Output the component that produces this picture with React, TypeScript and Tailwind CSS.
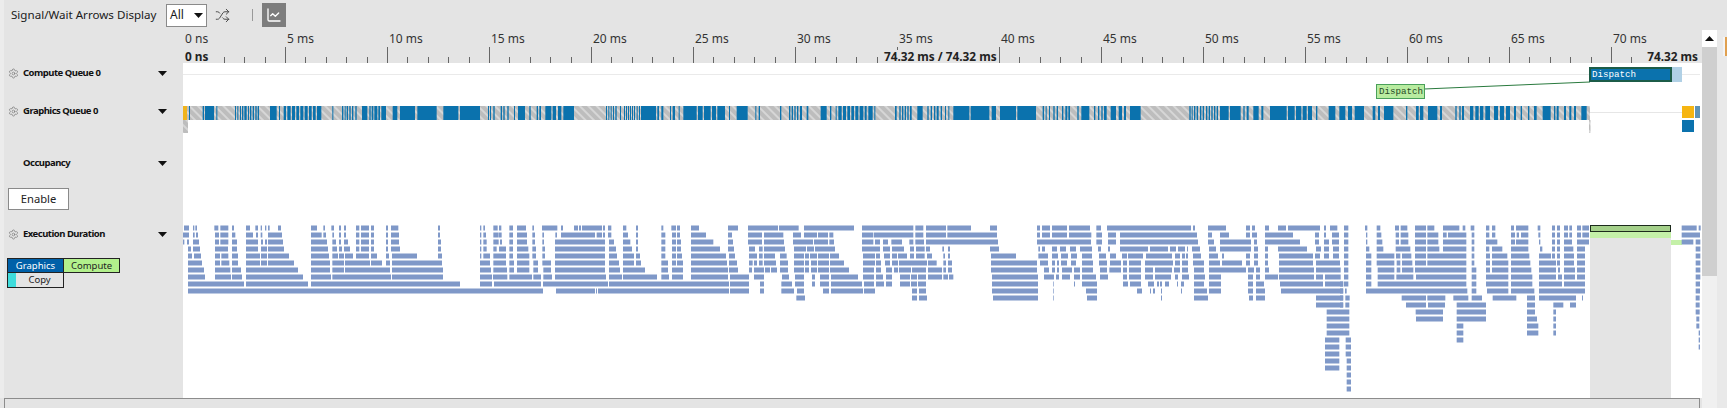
import { ChartLine, Settings, Shuffle } from "lucide-react";

type Seg = [number, number];

// segments are read off 3x crops, so each group has a base x and is divided by 3
const execGroups: { base: number; rows: Seg[][] }[] = [
  {
    base: 170,
    rows: [
      [[42,57],[69,73],[76,81],[133,145],[151,175],[186,192],[228,240],[256,264],[272,276],[285,289],[294,299],[324,333],[423,441],[460,465],[484,492],[507,513],[522,528],[558,568],[573,597],[603,612],[648,654],[663,685],[804,810],[930,934],[940,945],[970,983],[987,994],[1018,1029],[1041,1068],[1087,1092],[1116,1162],[1173,1179]],
      [[39,57],[69,74],[78,84],[135,147],[151,175],[186,196],[228,249],[258,264],[272,277],[294,336],[423,455],[460,468],[487,492],[507,513],[522,528],[558,568],[573,597],[603,612],[648,654],[663,687],[804,810],[930,934],[940,948],[970,986],[987,995],[1018,1029],[1041,1071],[1087,1095],[1117,1122],[1156,1161],[1173,1200]],
      [[39,43],[51,57],[69,87],[135,147],[151,175],[186,201],[228,264],[273,279],[285,291],[294,339],[423,471],[487,498],[507,513],[522,534],[558,568],[573,597],[603,612],[648,654],[663,687],[804,813],[930,934],[940,950],[970,986],[990,996],[1018,1029],[1041,1071],[1087,1095],[1117,1122],[1155,1200]],
      [[54,63],[69,90],[135,174],[186,201],[228,264],[273,291],[294,342],[423,474],[487,501],[507,516],[522,540],[558,568],[573,597],[603,612],[648,654],[663,690],[804,813],[930,934],[940,950],[970,980],[987,1008],[1018,1029],[1041,1075],[1087,1098],[1117,1125],[1155,1200]],
      [[54,66],[72,93],[135,150],[154,175],[186,204],[228,270],[273,291],[294,357],[423,477],[487,504],[507,522],[525,549],[558,597],[603,621],[648,657],[666,741],[804,816],[930,934],[940,960],[970,1008],[1018,1029],[1041,1078],[1087,1098],[1117,1125],[1155,1200]],
      [[54,96],[135,150],[154,178],[186,204],[228,270],[273,291],[294,372],[423,480],[487,522],[525,600],[603,636],[648,660],[666,816],[930,960],[970,1008],[1018,1032],[1041,1078],[1090,1104],[1117,1143],[1155,1200]],
      [[54,102],[135,181],[186,213],[228,384],[423,480],[487,522],[525,660],[666,819],[930,963],[970,1011],[1018,1032],[1041,1078],[1090,1104],[1120,1143],[1155,1200]],
      [[54,105],[135,183],[186,216],[228,399],[423,483],[487,663],[666,819],[930,966],[969,1012],[1018,1086],[1090,1113],[1120,1146],[1155,1200]],
      [[54,222],[228,414],[423,870],[930,966],[972,1113],[1119,1200]],
      [[54,1119],[1158,1200]],
    ],
  },
  {
    base: 570,
    rows: [
      [[12,24],[27,33],[36,96],[99,105],[114,124],[159,169],[198,204],[274,280],[304,318],[321,330],[363,387],[474,504],[534,624],[627,686],[702,852],[876,1030],[1036,1060],[1068,1128],[1132,1200]],
      [[0,75],[80,96],[99,105],[114,124],[159,174],[198,204],[274,286],[306,318],[321,330],[363,408],[474,486],[534,576],[582,640],[669,693],[702,741],[744,774],[778,790],[876,910],[912,1030],[1036,1060],[1068,1128],[1132,1200]],
      [[0,105],[117,132],[159,181],[198,204],[274,286],[306,318],[321,333],[363,430],[474,489],[534,576],[582,642],[669,729],[732,774],[778,792],[876,910],[915,930],[939,954],[964,996],[1018,1030],[1036,1062],[1068,1200]],
      [[0,105],[117,138],[159,186],[198,204],[274,286],[306,318],[321,333],[363,450],[474,492],[537,555],[567,578],[582,645],[672,708],[711,732],[735,795],[876,930],[939,960],[966,1002],[1020,1032],[1038,1064],[1068,1080],[1117,1122],[1134,1140]],
      [[0,105],[117,141],[159,192],[198,210],[274,286],[306,318],[321,336],[363,468],[477,495],[537,561],[567,578],[582,615],[630,650],[672,702],[705,717],[720,741],[744,777],[780,807],[879,915],[918,930],[942,960],[966,981],[984,1011],[1020,1032],[1038,1064],[1071,1086],[1120,1125],[1134,1140]],
      [[0,105],[117,147],[159,192],[198,213],[274,294],[306,318],[321,339],[363,471],[477,501],[537,548],[552,561],[567,578],[582,618],[630,654],[672,702],[705,717],[723,741],[744,777],[780,822],[879,915],[918,933],[945,960],[966,984],[987,1071],[1074,1100],[1120,1128],[1134,1146]],
      [[0,105],[117,150],[159,225],[274,294],[306,339],[363,474],[477,504],[537,546],[552,582],[585,600],[603,621],[630,654],[672,702],[705,717],[723,741],[744,777],[780,837],[879,912],[918,933],[948,966],[972,984],[987,1023],[1026,1068],[1074,1116],[1120,1128],[1134,1146]],
      [[0,108],[117,156],[159,261],[274,297],[306,339],[363,474],[480,537],[552,582],[636,657],[675,702],[726,735],[750,777],[783,864],[879,912],[918,939],[948,966],[990,1020],[1023,1041],[1044,1068],[1074,1116],[1120,1134],[1137,1150]],
      [[0,114],[117,477],[480,537],[570,582],[634,666],[675,702],[726,735],[750,777],[783,876],[882,912],[918,942],[948,966],[990,1020],[1023,1041],[1044,1068]],
      [[0,75],[78,81],[84,477],[480,537],[570,582],[634,672],[681,702],[759,777],[783,879],[882,915],[1026,1041],[1047,1068]],
      [[679,705],[1026,1041],[1047,1071]],
    ],
  },
  {
    base: 970,
    rows: [
      [[0,3],[60,81],[201,210],[216,240],[246,291],[297,360],[379,393],[411,663],[669,675],[714,768],[828,840],[846,855],[885,897],[924,948],[954,1050],[1062,1068],[1080,1102]],
      [[0,81],[201,210],[216,240],[246,291],[297,364],[379,396],[414,438],[450,681],[714,726],[750,777],[828,840],[846,861],[885,969],[1035,1047],[1062,1068],[1086,1107]],
      [[0,84],[201,363],[379,396],[414,438],[450,684],[714,732],[750,843],[852,861],[885,990],[1035,1047],[1062,1077],[1086,1107]],
      [[60,87],[205,210],[216,225],[246,261],[270,288],[300,318],[330,366],[384,393],[414,420],[450,534],[540,594],[600,618],[624,645],[651,654],[666,690],[717,738],[750,843],[852,864],[885,894],[924,1011],[1038,1053],[1062,1077],[1089,1107]],
      [[63,138],[205,234],[246,264],[273,294],[303,321],[336,366],[387,408],[420,438],[456,471],[474,519],[528,606],[615,630],[636,645],[648,654],[669,693],[717,744],[756,762],[828,840],[852,864],[885,894],[927,1029],[1035,1050],[1062,1077],[1089,1107]],
      [[63,201],[210,234],[246,255],[261,267],[273,291],[303,318],[336,369],[387,411],[420,453],[459,471],[477,513],[525,609],[615,630],[636,654],[669,702],[717,750],[756,816],[828,840],[852,864],[885,894],[927,1029],[1038,1110]],
      [[63,201],[222,237],[246,255],[261,267],[276,306],[312,330],[336,369],[390,411],[418,453],[459,471],[477,513],[525,549],[555,606],[612,630],[636,654],[672,702],[717,828],[834,852],[858,870],[885,897],[927,1032],[1038,1110]],
      [[66,204],[222,252],[258,267],[276,300],[312,330],[336,378],[390,414],[459,471],[477,513],[525,549],[555,603],[615,624],[636,657],[672,705],[717,753],[834,849],[858,870],[885,924],[927,1032],[1038,1059],[1065,1110]],
      [[66,204],[250,252],[312,315],[336,381],[459,474],[480,513],[534,552],[561,567],[570,576],[585,597],[621,624],[633,642],[672,702],[717,753],[834,849],[858,882],[930,1059],[1065,1119]],
      [[66,204],[250,252],[348,381],[501,516],[540,543],[549,555],[573,576],[633,636],[672,711],[717,753],[834,849],[858,885],[933,1119]],
      [[69,204],[250,252],[351,381],[573,576],[672,714],[837,849],[858,885],[1038,1119]],
      [[1038,1119]],
    ],
  },
  {
    base: 1340,
    rows: [
      [[12,25],[75,82],[110,121],[165,177],[182,202],[225,258],[262,283],[309,358],[368,376],[392,403],[438,448],[456,466],[513,522],[528,565],[593,601],[636,645],[651,660],[672,684],[688,696],[711,723],[727,747],[1025,1070],[1076,1082]],
      [[12,25],[78,82],[110,124],[167,177],[182,205],[225,258],[262,295],[309,320],[324,379],[395,403],[438,448],[456,466],[513,525],[530,537],[543,565],[595,601],[636,645],[651,660],[672,684],[688,696],[711,723],[727,747],[1025,1080]],
      [[12,25],[78,82],[110,127],[167,177],[182,205],[225,258],[262,295],[309,379],[395,403],[438,472],[513,525],[528,565],[597,601],[636,645],[651,660],[672,696],[711,747],[1025,1060],[1067,1081]],
      [[12,25],[78,88],[110,130],[167,211],[225,258],[262,298],[309,379],[395,403],[438,448],[456,487],[513,565],[600,607],[636,645],[651,660],[672,700],[711,735],[1067,1081]],
      [[12,25],[78,94],[110,163],[168,181],[186,214],[225,258],[262,379],[395,403],[438,450],[456,502],[513,568],[597,633],[636,645],[651,660],[672,702],[711,735],[1067,1081]],
      [[12,25],[78,94],[110,163],[170,181],[186,217],[225,258],[262,379],[395,403],[438,450],[456,505],[513,571],[597,648],[651,660],[672,702],[711,735],[1067,1081]],
      [[0,2],[12,25],[78,94],[113,163],[170,181],[186,220],[225,379],[395,409],[438,450],[456,505],[513,574],[597,648],[654,660],[672,705],[711,735],[1067,1081]],
      [[0,2],[12,25],[78,94],[113,163],[169,220],[228,379],[395,409],[438,505],[513,577],[597,648],[654,666],[672,705],[711,735],[1067,1081]],
      [[0,10],[12,25],[78,94],[113,379],[395,409],[438,505],[513,577],[597,666],[672,735],[1067,1080]],
      [[0,10],[15,20],[78,382],[395,409],[441,505],[513,583],[597,735],[1067,1080]],
      [[0,10],[16,29],[185,258],[262,316],[340,385],[395,426],[458,529],[561,585],[597,708],[726,729],[1067,1079]],
      [[0,10],[16,28],[198,258],[264,315],[350,438],[561,585],[640,670],[690,708],[1067,1079]],
      [[-40,28],[227,309],[350,438],[561,585],[640,648],[1067,1079]],
      [[-40,28],[228,309],[350,438],[561,591],[640,648],[1069,1078]],
      [[-40,28],[350,370],[561,595],[640,648],[1069,1078]],
      [[-40,28],[350,370],[561,595],[640,648],[1076,1080]],
      [[-45,-2],[17,33],[350,370],[1076,1080]],
      [[-45,-2],[17,33],[1076,1080]],
      [[-45,-2],[17,33]],
      [[-45,-2],[20,33]],
      [[-45,-2],[20,33]],
      [[20,33]],
      [[20,33]],
      [[20,33]],
    ],
  },
];

const queueGroups: { base: number; segs: Seg[] }[] = [
  { base: 180, segs: [[27,30],[68,72],[75,102],[109,112],[165,168],[172,175],[180,183],[186,190],[193,200],[204,207],[210,214],[218,222],[226,230],[233,237],[270,290],[297,300],[311,318],[322,332],[336,345],[349,357],[361,370],[374,383],[387,395],[399,407],[411,424],[457,460],[486,490],[494,497],[500,504],[508,512],[516,520],[526,530],[546,562],[568,572],[575,580],[583,592],[595,600],[604,618],[638,652],[660,705],[712,770],[790,835],[840,900]] },
  { base: 480, segs: [[24,27],[30,33],[40,44],[62,66],[70,74],[82,86],[102,105],[114,135],[148,152],[170,174],[178,183],[196,214],[218,228],[234,244],[250,282],[378,381],[385,388],[392,395],[399,402],[406,410],[420,423],[432,435],[438,441],[444,447],[450,453],[456,459],[462,465],[470,473],[477,480],[483,528],[532,537],[544,550],[570,573],[578,585],[596,599],[610,650],[654,668],[672,692],[696,708],[712,735],[747,750],[770,803],[826,829],[836,840],[900,904],[927,931],[935,939],[943,947],[951,955],[960,966],[980,985],[1022,1040],[1050,1054],[1067,1070],[1075,1085],[1089,1098],[1102,1110],[1114,1122],[1126,1135],[1139,1150],[1154,1160],[1165,1178],[1183,1186]] },
  { base: 880, segs: [[45,50],[58,62],[66,70],[74,78],[82,86],[90,95],[112,128],[142,146],[152,156],[162,166],[170,176],[182,186],[195,198],[205,208],[220,268],[272,328],[335,348],[360,408],[412,468],[488,492],[497,500],[507,510],[520,524],[530,534],[546,550],[556,562],[565,570],[592,596],[604,628],[642,646],[654,658],[664,668],[672,680],[692,708],[716,726],[732,738],[750,782],[928,932],[935,938],[942,946],[950,954],[960,964],[968,972],[978,982],[986,990],[994,998],[1002,1006],[1010,1014],[1020,1046],[1050,1082],[1090,1094],[1100,1106],[1120,1136],[1144,1150],[1170,1200]] },
  { base: 1280, segs: [[0,20],[24,44],[48,64],[68,80],[84,96],[108,112],[146,166],[178,196],[204,216],[224,252],[278,286],[294,300],[312,340],[378,382],[408,416],[420,430],[444,472],[480,486],[526,530],[538,542],[546,552],[570,580],[586,596],[600,610],[616,630],[642,654],[660,672],[678,690],[702,708],[722,726],[744,748],[762,770],[788,812],[822,826],[830,836],[852,858],[868,874],[882,888],[904,920]] },
];

// chart svg origin in the page
const OX = 183;
const OY = 63;

function TimelineChart() {
  return (
    <svg width="1519" height="335" className="block">
      <defs>
        <pattern id="hatch" width="6" height="6" patternUnits="userSpaceOnUse" patternTransform="rotate(45)">
          <rect width="6" height="6" fill="#bdbdbd" />
          <rect width="6" height="2" fill="#d6d6d6" />
        </pattern>
      </defs>
      <g transform={`translate(${-OX} ${-OY})`}>
        <rect x="183" y="74" width="1517" height="1" fill="#eaeaea" />
        <rect x="1590" y="112" width="92" height="1" fill="#e6e6e6" />

        <rect x="183" y="106" width="1407" height="14" fill="url(#hatch)" />
        <rect x="183" y="120" width="5" height="13" fill="url(#hatch)" />
        <rect x="1589" y="120" width="1.5" height="13" fill="url(#hatch)" />
        <rect x="183" y="106" width="4" height="14" fill="#f0b41c" />
        {queueGroups.map((g) =>
          g.segs.map(([a, b]) => (
            <rect key={`${g.base}-${a}`} x={g.base + a / 3} y="106" width={(b - a) / 3} height="14" fill="#0b72ad" />
          ))
        )}
        <rect x="1682" y="106" width="12" height="12" fill="#f6b511" />
        <rect x="1695" y="106" width="5" height="12" fill="#5f93b5" />
        <rect x="1682" y="120" width="12" height="12" fill="#0b72ad" />

        <rect x="1671" y="67" width="11" height="15" fill="#b0d0e5" />
        <line x1="1424" y1="89" x2="1590" y2="82" stroke="#2a7a3e" strokeWidth="1" />

        <rect x="1590" y="232" width="81" height="166" fill="#e4e4e4" />
        <rect x="1590" y="232" width="81" height="6" fill="#c4f0a8" />
        <rect x="1671" y="240" width="11" height="5" fill="#c4f0a8" />
        {execGroups.map((g) =>
          g.rows.map((row, i) =>
            row.map(([a, b]) => (
              <rect key={`${g.base}-${i}-${a}`} x={g.base + a / 3} y={225.5 + i * 7} width={(b - a) / 3} height="5" fill="#7f98c8" />
            ))
          )
        )}
        <rect x="1590.5" y="225.5" width="80" height="6" fill="#a4d08a" stroke="#1c2a1c" strokeWidth="1" />
      </g>
    </svg>
  );
}

function Caret() {
  return (
    <svg width="9" height="5" viewBox="0 0 9 5" className="shrink-0">
      <polygon points="0,0 9,0 4.5,5" fill="#111" />
    </svg>
  );
}

function LaneLabel({ label, gear = true, className }: { label: string; gear?: boolean; className: string }) {
  return (
    <div className={`flex items-center h-[20px] pr-[16px] text-[9.5px] tracking-[-0.5px] font-bold text-[#111] ${gear ? "pl-[4px] gap-[4px]" : "pl-[19px]"} ${className}`}>
      {gear && <Settings size={11} strokeWidth={1.25} className="text-[#666] shrink-0" />}
      <span className="flex-1 whitespace-nowrap">{label}</span>
      <Caret />
    </div>
  );
}

function Ruler() {
  const labels = ["0 ns"];
  for (let ms = 5; ms <= 70; ms += 5) labels.push(`${ms} ms`);
  const ticks = [];
  for (let ms = 1; ms <= 74; ms++) {
    const x = Math.round(ms * 20.4) + 0.5;
    ticks.push(<line key={ms} x1={x} x2={x} y1={ms % 5 === 0 ? 0 : 10} y2="16" stroke="#666" />);
  }
  return (
    <div className="relative h-[33px] overflow-hidden">
      <div className="flex h-[20px] text-[12px] leading-[18px] text-[#333]">
        {labels.map((l) => (
          <div key={l} className="w-[102px] shrink-0 pl-[2px] whitespace-nowrap">{l}</div>
        ))}
      </div>
      <svg width="1519" height="16" className="absolute left-0 bottom-0">{ticks}</svg>
      <div className="relative flex justify-between pl-[2px] pr-[4px] text-[11.8px] leading-[13px] font-bold text-[#222]">
        <span className="bg-[#e4e4e4] pr-[2px]">0 ns</span>
        <span className="ml-[25px] bg-[#e4e4e4]">74.32 ms / 74.32 ms</span>
        <span className="bg-[#e4e4e4] pl-[2px]">74.32 ms</span>
      </div>
    </div>
  );
}

export default function App() {
  return (
    <div className="w-[1727px] h-[408px] overflow-hidden bg-[#e4e4e4] font-['Noto_Sans',sans-serif]">
      {/* toolbar */}
      <div className="flex items-center h-[30px] border-l-4 border-[#ececec] pl-[7px] text-[#1a1a1a]">
        <span className="w-[147px] text-[11.6px] whitespace-nowrap">Signal/Wait Arrows Display</span>
        <div className="ml-[8px] flex items-center justify-between w-[41px] h-[23px] bg-white border border-[#8a8a8a] pl-[3px] pr-[3px] text-[12px]">
          <span>All</span>
          <Caret />
        </div>
        <Shuffle size={15} strokeWidth={1.5} className="ml-[8px] text-[#444]" />
        <div className="ml-[22px] w-px h-[12px] bg-[#999]" />
        <div className="ml-[9px] flex items-center justify-center w-[24px] h-[24px] bg-[#7d7d7d]">
          <ChartLine size={16} strokeWidth={2} className="text-white" />
        </div>
      </div>

      <div className="flex h-[378px]">
        <div className="w-[1702px] shrink-0 flex flex-col">
          <div className="flex h-[368px]">
            {/* lane labels */}
            <div className="w-[183px] shrink-0 border-l-4 border-[#ececec] pt-[33px]">
              <LaneLabel label="Compute Queue 0" className="mt-0" />
              <LaneLabel label="Graphics Queue 0" className="mt-[18px]" />
              <LaneLabel label="Occupancy" gear={false} className="mt-[32px]" />
              <button className="block ml-[4px] mt-[15px] w-[61px] h-[22px] bg-white border border-[#8a8a8a] text-[11.2px] text-[#222]">
                Enable
              </button>
              <LaneLabel label="Execution Duration" className="mt-[14px]" />
              <div className="ml-[3px] mt-[14px] text-[9.5px] leading-[13px]">
                <div className="flex">
                  <div className="w-[56px] h-[15px] bg-[#0060a8] text-white text-center border border-[#222] border-r-0">Graphics</div>
                  <div className="w-[57px] h-[15px] bg-[#b2f08c] text-[#222] text-center border border-[#222]">Compute</div>
                </div>
                <div className="flex w-[57px] h-[15px] bg-[#e4e4e4] text-[#222] border border-[#222] border-t-0">
                  <div className="w-[8px] bg-[#3fdcdc]" />
                  <div className="flex-1 text-center">Copy</div>
                </div>
              </div>
            </div>

            <div className="w-[1519px] shrink-0">
              <Ruler />
              <div className="relative h-[335px] bg-white overflow-hidden">
                <TimelineChart />
                <div className="absolute left-[1406px] top-[4px] w-[83px] h-[15px] bg-[#0b72ad] border-2 border-[#1c5c48] text-white font-['Liberation_Mono',monospace] text-[9.2px] leading-[11px] pl-[1px]">
                  Dispatch
                </div>
                <div className="absolute left-[1193px] top-[21px] w-[49px] h-[15px] bg-[#b8eca0] border border-[#4aa05a] text-[#274a27] font-['Liberation_Mono',monospace] text-[9.2px] leading-[13px] pl-[2px]">
                  Dispatch
                </div>
              </div>
            </div>
          </div>
          <div className="h-[10px] ml-[4px] mr-[2px] border-t border-x border-[#8c8c8c] bg-[#e4e4e4]" />
        </div>

        {/* scrollbar */}
        <div className="w-[15px] shrink-0 flex flex-col bg-[#f0f0f0]">
          <div className="flex items-center justify-center h-[17px] bg-white">
            <svg width="9" height="5" viewBox="0 0 9 5">
              <polygon points="0,5 9,5 4.5,0" fill="#111" />
            </svg>
          </div>
          <div className="h-[229px] bg-[#cfcfcf]" />
        </div>

        <div className="flex-1 pl-[6px] pt-[7px] bg-[#e9e9e9]">
          <div className="h-[19px] bg-[#f4f4f4] pl-[2px]">
            <div className="h-full bg-[#e0a050]" />
          </div>
        </div>
      </div>
    </div>
  );
}
